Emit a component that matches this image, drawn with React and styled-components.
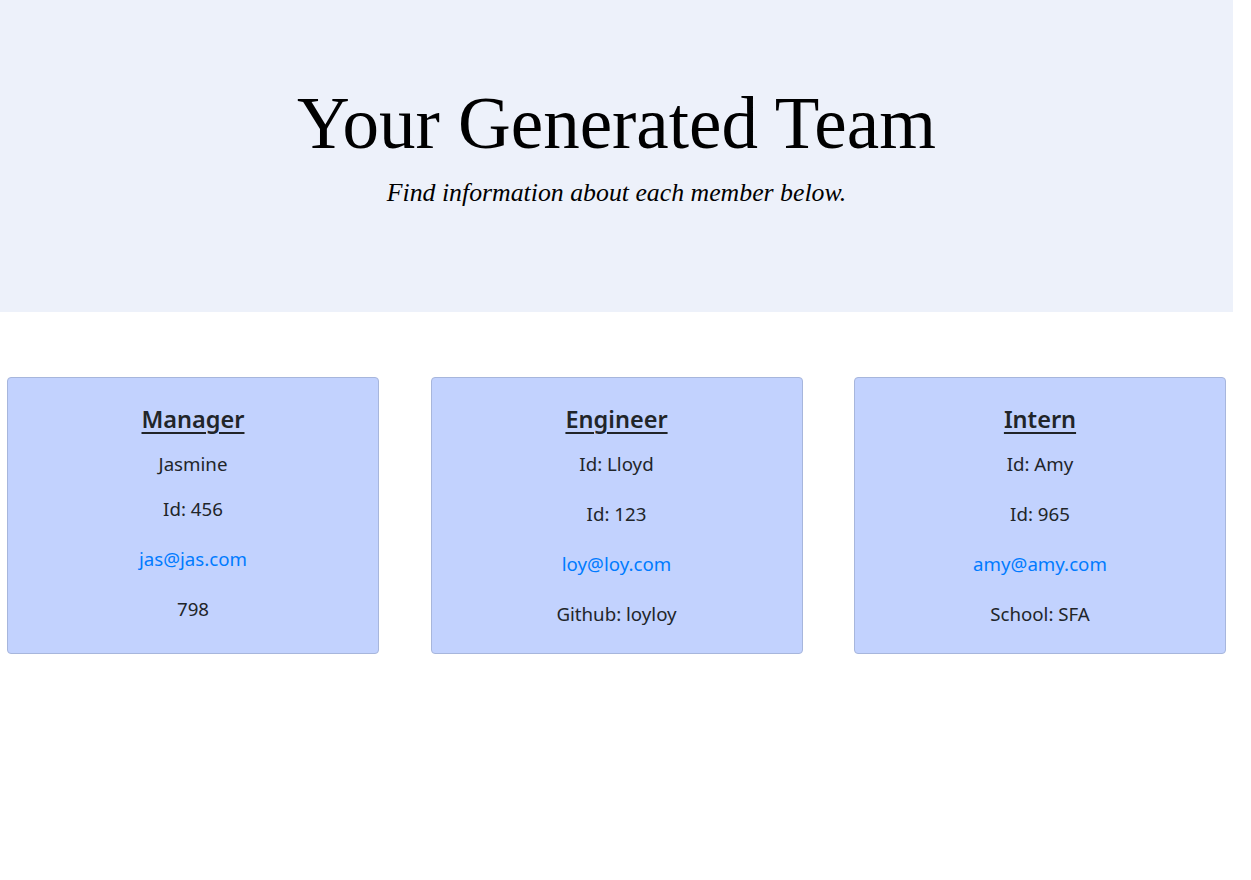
import React from "react";
import styled, { createGlobalStyle } from "styled-components";

const GlobalStyle = createGlobalStyle`
  html, body {
    margin: 0;
    padding: 0;
    background: #ffffff;
  }
  * { box-sizing: border-box; }
`;

const Page = styled.div`
  width: 1233px;
  font-family: "Noto Sans", "Open Sans", sans-serif;
  color: #212529;
`;

const Hero = styled.header`
  height: 312px;
  background: #edf1fa;
  display: flex;
  flex-direction: column;
  align-items: center;
  padding-top: 83px;
`;

const Title = styled.h1`
  margin: 0;
  font-family: "Liberation Serif", serif;
  font-weight: 400;
  font-size: 73px;
  line-height: 82px;
  color: #000;
`;

const Lead = styled.p`
  margin: 13px 0 0;
  font-family: "Liberation Serif", serif;
  font-style: italic;
  font-size: 25.8px;
  line-height: 30px;
  color: #000;
`;

const Cards = styled.section`
  display: grid;
  grid-template-columns: repeat(3, 372px);
  justify-content: space-between;
  padding: 0 7px;
  margin-top: 65px;
`;

const Card = styled.article`
  display: flex;
  flex-direction: column;
  align-items: center;
  background: #c2d2fe;
  border: 1px solid #a7b6dc;
  border-radius: 4px;
  padding: 26px 16px 24px;
  text-align: center;
`;

const Role = styled.h2`
  margin: 0;
  font-size: 23.5px;
  line-height: 30px;
  font-weight: 600;
  text-decoration: underline;
  text-decoration-thickness: 2px;
  text-underline-offset: 4px;
  color: #212529;
`;

const Row = styled.p`
  margin: ${(p) => p.$gap}px 0 0;
  font-size: 18.7px;
  line-height: 30px;
  color: #212529;
`;

const Mail = styled.a`
  color: #007bff;
  text-decoration: none;
`;

const team = [
  {
    role: "Manager",
    rows: [
      { text: "Jasmine", gap: 15 },
      { text: "Id: 456", gap: 15 },
      { mail: "jas@jas.com", gap: 20 },
      { text: "798", gap: 20 },
    ],
  },
  {
    role: "Engineer",
    rows: [
      { text: "Id: Lloyd", gap: 15 },
      { text: "Id: 123", gap: 20 },
      { mail: "loy@loy.com", gap: 20 },
      { text: "Github: loyloy", gap: 20 },
    ],
  },
  {
    role: "Intern",
    rows: [
      { text: "Id: Amy", gap: 15 },
      { text: "Id: 965", gap: 20 },
      { mail: "amy@amy.com", gap: 20 },
      { text: "School: SFA", gap: 20 },
    ],
  },
];

export default function App() {
  return (
    <Page>
      <GlobalStyle />
      <Hero>
        <Title>Your Generated Team</Title>
        <Lead>Find information about each member below.</Lead>
      </Hero>
      <Cards>
        {team.map((m) => (
          <Card key={m.role}>
            <Role>{m.role}</Role>
            {m.rows.map((r, i) => (
              <Row key={i} $gap={r.gap}>
                {r.mail ? <Mail href={`mailto:${r.mail}`}>{r.mail}</Mail> : r.text}
              </Row>
            ))}
          </Card>
        ))}
      </Cards>
    </Page>
  );
}
